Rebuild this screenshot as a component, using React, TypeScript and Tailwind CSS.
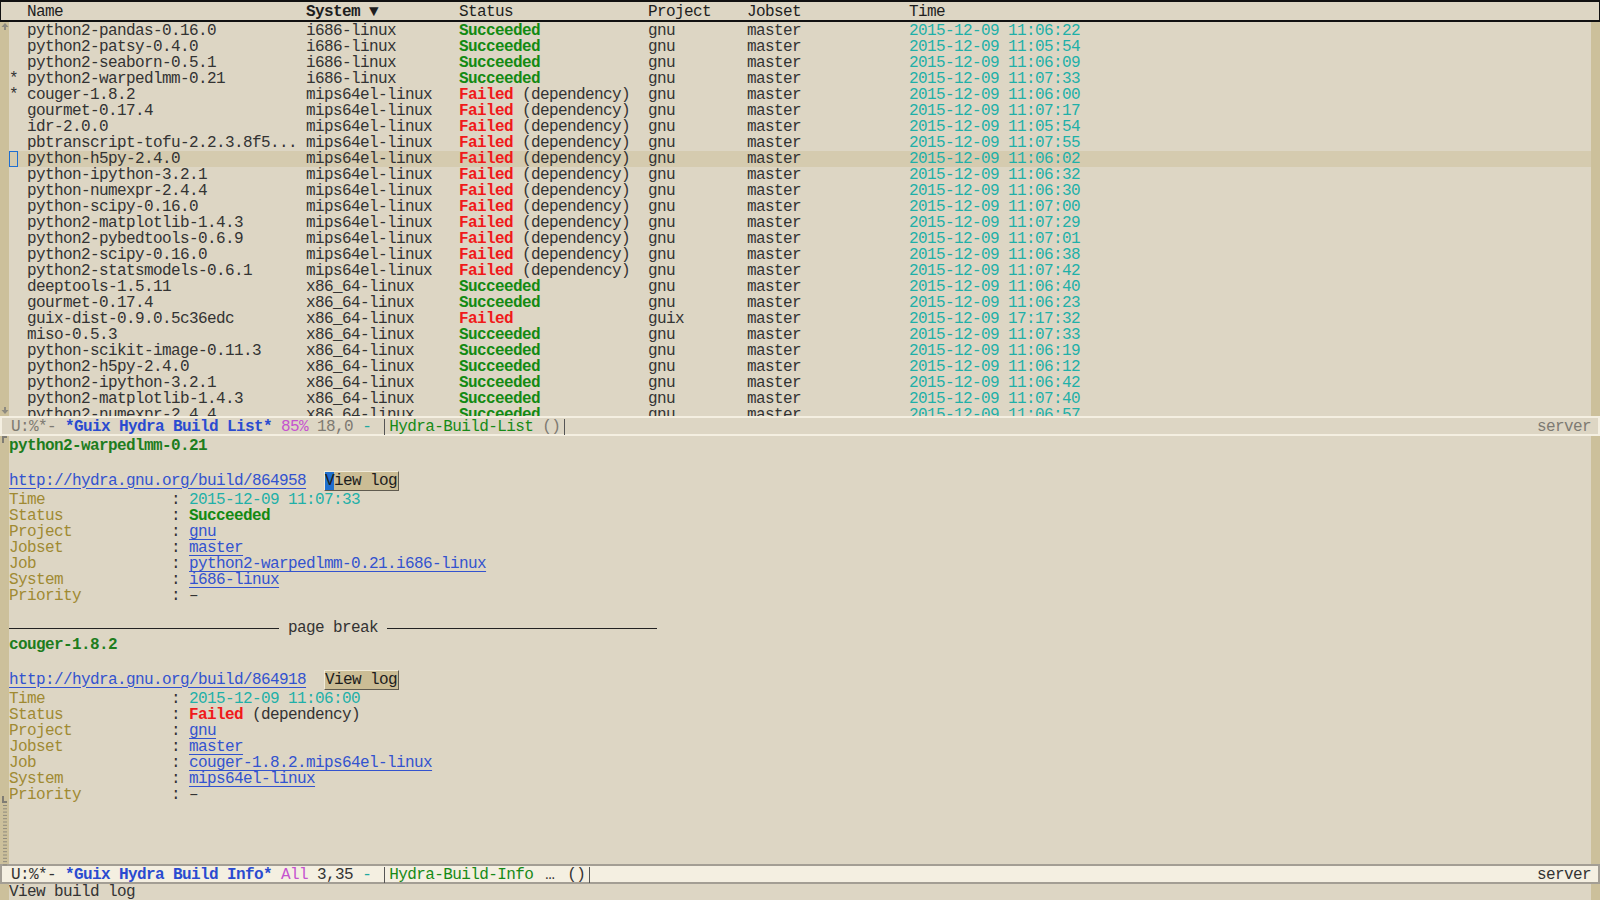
import React from "react";

type Build = {
  mark?: boolean;
  current?: boolean;
  name: string;
  system: string;
  status: "ok" | "dep" | "fail";
  project: string;
  time: string;
};

const builds: Build[] = [
  { name: "python2-pandas-0.16.0", system: "i686-linux", status: "ok", project: "gnu", time: "2015-12-09 11:06:22" },
  { name: "python2-patsy-0.4.0", system: "i686-linux", status: "ok", project: "gnu", time: "2015-12-09 11:05:54" },
  { name: "python2-seaborn-0.5.1", system: "i686-linux", status: "ok", project: "gnu", time: "2015-12-09 11:06:09" },
  { mark: true, name: "python2-warpedlmm-0.21", system: "i686-linux", status: "ok", project: "gnu", time: "2015-12-09 11:07:33" },
  { mark: true, name: "couger-1.8.2", system: "mips64el-linux", status: "dep", project: "gnu", time: "2015-12-09 11:06:00" },
  { name: "gourmet-0.17.4", system: "mips64el-linux", status: "dep", project: "gnu", time: "2015-12-09 11:07:17" },
  { name: "idr-2.0.0", system: "mips64el-linux", status: "dep", project: "gnu", time: "2015-12-09 11:05:54" },
  { name: "pbtranscript-tofu-2.2.3.8f5...", system: "mips64el-linux", status: "dep", project: "gnu", time: "2015-12-09 11:07:55" },
  { current: true, name: "python-h5py-2.4.0", system: "mips64el-linux", status: "dep", project: "gnu", time: "2015-12-09 11:06:02" },
  { name: "python-ipython-3.2.1", system: "mips64el-linux", status: "dep", project: "gnu", time: "2015-12-09 11:06:32" },
  { name: "python-numexpr-2.4.4", system: "mips64el-linux", status: "dep", project: "gnu", time: "2015-12-09 11:06:30" },
  { name: "python-scipy-0.16.0", system: "mips64el-linux", status: "dep", project: "gnu", time: "2015-12-09 11:07:00" },
  { name: "python2-matplotlib-1.4.3", system: "mips64el-linux", status: "dep", project: "gnu", time: "2015-12-09 11:07:29" },
  { name: "python2-pybedtools-0.6.9", system: "mips64el-linux", status: "dep", project: "gnu", time: "2015-12-09 11:07:01" },
  { name: "python2-scipy-0.16.0", system: "mips64el-linux", status: "dep", project: "gnu", time: "2015-12-09 11:06:38" },
  { name: "python2-statsmodels-0.6.1", system: "mips64el-linux", status: "dep", project: "gnu", time: "2015-12-09 11:07:42" },
  { name: "deeptools-1.5.11", system: "x86_64-linux", status: "ok", project: "gnu", time: "2015-12-09 11:06:40" },
  { name: "gourmet-0.17.4", system: "x86_64-linux", status: "ok", project: "gnu", time: "2015-12-09 11:06:23" },
  { name: "guix-dist-0.9.0.5c36edc", system: "x86_64-linux", status: "fail", project: "guix", time: "2015-12-09 17:17:32" },
  { name: "miso-0.5.3", system: "x86_64-linux", status: "ok", project: "gnu", time: "2015-12-09 11:07:33" },
  { name: "python-scikit-image-0.11.3", system: "x86_64-linux", status: "ok", project: "gnu", time: "2015-12-09 11:06:19" },
  { name: "python2-h5py-2.4.0", system: "x86_64-linux", status: "ok", project: "gnu", time: "2015-12-09 11:06:12" },
  { name: "python2-ipython-3.2.1", system: "x86_64-linux", status: "ok", project: "gnu", time: "2015-12-09 11:06:42" },
  { name: "python2-matplotlib-1.4.3", system: "x86_64-linux", status: "ok", project: "gnu", time: "2015-12-09 11:07:40" },
  { name: "python2-numexpr-2.4.4", system: "x86_64-linux", status: "ok", project: "gnu", time: "2015-12-09 11:06:57" },
];

function Status({ s }: { s: Build["status"] }) {
  if (s === "ok") return <span className="font-bold text-[#138a13]">Succeeded</span>;
  return (
    <>
      <span className="font-bold text-[#f01a1a]">Failed</span>
      {s === "dep" && <span> (dependency)</span>}
    </>
  );
}

function Fringe({ children }: { children?: React.ReactNode }) {
  return <div className="w-[9px] shrink-0 bg-[#ccc09b] relative">{children}</div>;
}

function BuildRow({ b }: { b: Build }) {
  return (
    <div className={`flex h-[16px] whitespace-pre ${b.current ? "bg-[#d5cbaf]" : ""}`}>
      <span className="w-[18px] shrink-0 relative">
        {b.current ? (
          <span className="absolute left-0 top-0 w-[9px] h-[16px] border border-[#1f6fd0]" />
        ) : b.mark ? (
          "*"
        ) : null}
      </span>
      <span className="w-[279px] shrink-0">{b.name}</span>
      <span className="w-[153px] shrink-0">{b.system}</span>
      <span className="w-[189px] shrink-0">
        <Status s={b.status} />
      </span>
      <span className="w-[99px] shrink-0">{b.project}</span>
      <span className="w-[162px] shrink-0">master</span>
      <span className="text-[#1fb0a8]">{b.time}</span>
    </div>
  );
}

function ModeLine({
  active,
  buffer,
  pos,
  line,
  mode,
  extra,
}: {
  active?: boolean;
  buffer: string;
  pos: string;
  line: string;
  mode: string;
  extra?: boolean;
}) {
  const dim = active ? "text-[#333]" : "text-[#7d7a72]";
  return (
    <div
      className={`h-[20px] shrink-0 border-2 flex items-start pt-[1px] whitespace-pre leading-[16px] ${
        active ? "bg-[#f4efe1] border-[#a39e94]" : "bg-[#ddd6c4] border-[#f4efe1]"
      }`}
    >
      <span className={dim}> U:%*- </span>
      <span className="font-bold text-[#2a4bd0]">{buffer}</span>
      <span> </span>
      <span className="text-[#c553cf]">{pos}</span>
      <span className={dim}> {line} </span>
      <span className="text-[#20a8a0]">-</span>
      <span className="ml-[13px] border-x border-[#555] h-[16px] pl-[4px] pr-[4px] flex">
        <span className="text-[#178a17]">{mode}</span>
        {extra ? (
          <>
            <span className={`ml-[12px] ${dim}`}>…</span>
            <span className={`ml-[13px] ${dim}`}>()</span>
          </>
        ) : (
          <span className={dim}> ()</span>
        )}
      </span>
      <span className={`ml-auto mr-[7px] ${dim}`}>server</span>
    </div>
  );
}

function Link({ children }: { children: React.ReactNode }) {
  return <span className="text-[#3353cf] underline underline-offset-[3px] decoration-[#3353cf]">{children}</span>;
}

function Field({ label, children }: { label: string; children: React.ReactNode }) {
  return (
    <div className="flex h-[16px] whitespace-pre">
      <span className="w-[162px] shrink-0 text-[#a08a32]">{label}</span>
      <span>: </span>
      <span>{children}</span>
    </div>
  );
}

function InfoBlock({
  name,
  url,
  time,
  status,
  job,
  system,
  cursor,
}: {
  name: string;
  url: string;
  time: string;
  status: Build["status"];
  job: string;
  system: string;
  cursor?: boolean;
}) {
  return (
    <div>
      <div className="h-[16px] pt-[1px] font-bold text-[#1d7d1d]">{name}</div>
      <div className="h-[16px]" />
      <div className="h-[23px] flex items-center whitespace-pre">
        <Link>{url}</Link>
        <span className="ml-[18px] h-[20px] flex items-center bg-[#cbbd95] border border-t-[#f1ebd9] border-l-[#f1ebd9] border-b-[#5f5b4f] border-r-[#5f5b4f] pr-[1px] text-[#1c1c1c]">
          <span className={cursor ? "bg-[#1e6fcf] h-[18px] leading-[18px]" : ""}>V</span>
          iew log
        </span>
      </div>
      <Field label="Time">
        <span className="text-[#1fb0a8]">{time}</span>
      </Field>
      <Field label="Status">
        <Status s={status} />
      </Field>
      <Field label="Project">
        <Link>gnu</Link>
      </Field>
      <Field label="Jobset">
        <Link>master</Link>
      </Field>
      <Field label="Job">
        <Link>{job}</Link>
      </Field>
      <Field label="System">
        <Link>{system}</Link>
      </Field>
      <Field label="Priority">–</Field>
    </div>
  );
}

function EmptyLines() {
  const ys = Array.from({ length: 19 }, (_, i) => i * 3.3 + 1);
  return (
    <svg width="9" height="62" className="absolute left-0 top-[368px]">
      {ys.map((y) => (
        <rect key={y} x="3" y={y} width="4" height="1" fill="#8f8b7e" />
      ))}
    </svg>
  );
}

export default function App() {
  return (
    <div className="w-[1600px] h-[900px] overflow-hidden bg-[#ddd6c4] text-[#333] font-['Liberation_Mono',monospace] text-[16px] tracking-[-0.6px] leading-[16px] flex flex-col">
      {/* upper window: build list */}
      <div className="h-[416px] shrink-0 flex flex-col">
        <div className="h-[22px] shrink-0 border-t-2 border-b-2 border-x border-[#111] flex items-start pt-[2px] whitespace-pre pl-[26px] text-[#1e1e1e] leading-[16px]">
          <span className="w-[279px] shrink-0">Name</span>
          <span className="w-[153px] shrink-0 font-bold">System ▼</span>
          <span className="w-[189px] shrink-0">Status</span>
          <span className="w-[99px] shrink-0">Project</span>
          <span className="w-[162px] shrink-0">Jobset</span>
          <span>Time</span>
        </div>
        <div className="flex-1 flex min-h-0">
          <Fringe>
            <svg width="9" height="394" className="absolute left-0 top-0">
              <path d="M5 1 L1.5 5 L4 5 L4 8 L6 8 L6 5 L8.5 5 Z" fill="#8d8a80" />
              <path d="M5 392 L1.5 388 L4 388 L4 385 L6 385 L6 388 L8.5 388 Z" fill="#8d8a80" />
            </svg>
          </Fringe>
          <div className="flex-1 overflow-hidden pt-[1px]">
            {builds.map((b, i) => (
              <BuildRow key={i} b={b} />
            ))}
          </div>
          <Fringe />
        </div>
      </div>

      <ModeLine buffer="*Guix Hydra Build List*" pos="85%" line="18,0" mode="Hydra-Build-List" />

      {/* lower window: build info */}
      <div className="flex-1 flex min-h-0">
        <Fringe>
          <svg width="9" height="428" className="absolute left-0 top-0">
            <path d="M2 0 H7 V2 H4 V7 H2 Z" fill="#7f7c74" />
            <path d="M2 360 H4 V365 H7 V367 H2 Z" fill="#7f7c74" />
          </svg>
          <EmptyLines />
        </Fringe>
        <div className="flex-1 overflow-hidden pt-[1px]">
          <InfoBlock
            name="python2-warpedlmm-0.21"
            url="http://hydra.gnu.org/build/864958"
            time="2015-12-09 11:07:33"
            status="ok"
            job="python2-warpedlmm-0.21.i686-linux"
            system="i686-linux"
            cursor
          />
          <div className="h-[16px]" />
          <div className="h-[16px] w-[648px] flex items-center">
            <div className="flex-1 h-px bg-[#222]" />
            <span className="px-[9px]">page break</span>
            <div className="flex-1 h-px bg-[#222]" />
          </div>
          <InfoBlock
            name="couger-1.8.2"
            url="http://hydra.gnu.org/build/864918"
            time="2015-12-09 11:06:00"
            status="dep"
            job="couger-1.8.2.mips64el-linux"
            system="mips64el-linux"
          />
        </div>
        <Fringe />
      </div>

      <ModeLine active buffer="*Guix Hydra Build Info*" pos="All" line="3,35" mode="Hydra-Build-Info" extra />

      {/* echo area */}
      <div className="h-[16px] shrink-0 flex">
        <Fringe />
        <div className="flex-1 whitespace-pre">View build log</div>
        <Fringe />
      </div>
    </div>
  );
}
